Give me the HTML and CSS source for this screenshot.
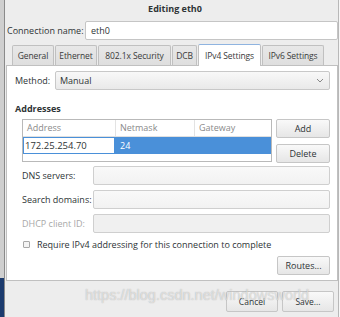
FILE: index.html
```html
<!DOCTYPE html>
<html>
<head>
<meta charset="utf-8">
<link rel="stylesheet" href="styles.css">
</head>
<body>
<div class="screen">
  <div class="bgwin"></div>
  <div class="dialog">
    <div class="title">Editing eth0</div>
    <div class="conn-row">
      <span class="label">Connection name:</span>
      <div class="entry conn-entry">eth0</div>
    </div>
    <div class="tabs">
      <div class="tab t-gen">General</div>
      <div class="tab t-eth">Ethernet</div>
      <div class="tab t-sec">802.1x Security</div>
      <div class="tab t-dcb">DCB</div>
      <div class="tab t-v4 active">IPv4 Settings</div>
      <div class="tab t-v6">IPv6 Settings</div>
    </div>
    <div class="panel">
      <div class="method-row">
        <span class="label">Method:</span>
        <div class="combo"><span>Manual</span>
          <svg class="chev" width="8" height="5" viewBox="0 0 8 5"><path d="M1 1 L4 4 L7 1" fill="none" stroke="#888" stroke-width="1"/></svg>
        </div>
      </div>
      <div class="section-title">Addresses</div>
      <div class="addr-row">
        <div class="table">
          <div class="thead">
            <div class="th c1">Address</div>
            <div class="th c2">Netmask</div>
            <div class="th c3">Gateway</div>
          </div>
          <div class="trow sel">
            <div class="td c1"><div class="cell-edit">172.25.254.70</div></div>
            <div class="td c2">24</div>
            <div class="td c3"></div>
          </div>
        </div>
        <div class="btn-col">
          <div class="btn">Add</div>
          <div class="btn">Delete</div>
        </div>
      </div>
      <div class="form">
        <span class="label">DNS servers:</span><div class="entry"></div>
        <span class="label">Search domains:</span><div class="entry"></div>
        <span class="label dim">DHCP client ID:</span><div class="entry disabled"></div>
      </div>
      <div class="check-row">
        <span class="checkbox"></span>
        <span class="label">Require IPv4 addressing for this connection to complete</span>
      </div>
      <div class="routes-row"><div class="btn">Routes...</div></div>
    </div>
    <div class="footer">
      <div class="btn fbtn">Cancel</div>
      <div class="btn fbtn">Save...</div>
    </div>
    <div class="watermark">https://blog.csdn.net/windowsworld</div>
  </div>
  <div class="rightedge"></div>
</div>
</body>
</html>
```

FILE: styles.css
```css
* { box-sizing: border-box; }
html, body { margin: 0; padding: 0; }
body {
  width: 340px;
  height: 317px;
  overflow: hidden;
  font-family: "Open Sans", "DejaVu Sans", sans-serif;
  font-size: 9px;
  color: #2e3436;
  background: #ededed;
}
.screen {
  display: flex;
  height: 317px;
}
.bgwin {
  width: 5px;
  flex: none;
  background: linear-gradient(to bottom, #cfcfcf 0, #cfcfcf 278px, #1c3b6e 278px, #1c3b6e 100%);
  border-right: 1px solid #8a8a8a;
}
.dialog {
  position: relative;
  flex: 1;
  background: #ededed;
  display: flex;
  flex-direction: column;
  padding: 0 0 0 1px;
}
.rightedge {
  width: 2px;
  flex: none;
  background: #f6f6f6;
  border-left: 1px solid #b8b8b8;
}
.title {
  height: 19px;
  line-height: 17px;
  text-align: center;
  font-weight: bold;
  font-size: 9px;
  color: #2e3436;
  padding-left: 6px;
}
.conn-row {
  display: flex;
  align-items: center;
  height: 19px;
  margin-top: 2px;
  padding-left: 1px;
}
.conn-row .label { width: 78px; flex: none; }
.entry {
  height: 19px;
  background: #fff;
  border: 1px solid #c5c5c5;
  border-radius: 2px;
  padding-left: 5px;
  line-height: 17px;
}
.conn-entry { flex: 1; }
.tabs {
  display: flex;
  align-items: flex-end;
  height: 25px;
  padding-left: 6px;
}
.tab {
  flex: none;
  height: 20px;
  white-space: nowrap;
  text-align: center;
  font-size: 8.5px;
  letter-spacing: -0.1px;
  line-height: 19px;
  border: 1px solid #c0c0c0;
  border-bottom: none;
  border-radius: 2px 2px 0 0;
  background: linear-gradient(#e8e8e8, #dedede);
  margin-right: 1px;
  color: #3a3a3a;
  overflow: hidden;
}
.t-gen { width: 42px; }
.t-eth { width: 42px; }
.t-sec { width: 73px; }
.t-dcb { width: 25px; }
.t-v4 { width: 63px; }
.t-v6 { width: 62px; }
.tab.active {
  height: 22px;
  background: #fff;
  border-top: 1px solid #8fb4e0;
  line-height: 21px;
  position: relative;
  margin-bottom: -1px;
}
.panel {
  background: #fff;
  border: 1px solid #c0c0c0;
  height: 216px;
  margin-right: 0;
  padding: 5px 7px 0 8px;
}
.method-row {
  display: flex;
  align-items: center;
  height: 19px;
}
.method-row .label { width: 40px; flex: none; }
.combo {
  flex: 1;
  height: 19px;
  border: 1px solid #c8c8c8;
  border-radius: 2px;
  background: linear-gradient(#f8f8f8, #e9e9e9);
  display: flex;
  align-items: center;
  justify-content: space-between;
  padding: 0 5px 0 4px;
}
.section-title {
  font-weight: bold;
  margin-top: 12px;
  height: 14px;
  line-height: 14px;
}
.addr-row {
  display: flex;
  margin-top: 3px;
  padding-left: 7px;
}
.table {
  width: 250px;
  height: 43px;
  border: 1px solid #b9b9b9;
  background: #fff;
  flex: none;
}
.thead { display: flex; height: 17px; border-bottom: 1px solid #e0e0e0; }
.th {
  color: #8a8a8a;
  line-height: 16px;
  padding-left: 4px;
  border-right: 1px solid #e3e3e3;
}
.th.c3 { border-right: none; }
.c1 { width: 93px; }
.c2 { width: 79px; }
.c3 { flex: 1; }
.trow { display: flex; height: 17px; }
.trow.sel { background: #4a90d9; color: #fff; }
.td { line-height: 17px; padding-left: 4px; }
.td.c1 { padding: 0; }
.cell-edit {
  width: 92px;
  height: 17px;
  background: #fff;
  color: #2e3436;
  border: 1px solid #4a90d9;
  padding-left: 1px;
  line-height: 15px;
  font-size: 9.5px;
}
.btn-col {
  display: flex;
  flex-direction: column;
  gap: 6px;
  margin-left: 4px;
  flex: 1;
}
.btn {
  height: 19px;
  border: 1px solid #c6c6c6;
  border-radius: 2px;
  background: linear-gradient(#f9f9f9, #e6e6e6);
  text-align: center;
  line-height: 17px;
  color: #2e3436;
}
.form {
  display: grid;
  grid-template-columns: 71px 1fr;
  row-gap: 5px;
  align-items: center;
  margin-top: 3px;
  padding-left: 7px;
}
.form .entry {
  background: linear-gradient(#f9f9f9, #f2f2f2);
  border-color: #cfcfcf;
}
.form .entry.disabled { background: #f0f0f0; }
.dim { color: #a8a8a8; }
.check-row {
  display: flex;
  align-items: center;
  margin-top: 5px;
  padding-left: 8px;
  height: 12px;
}
.checkbox {
  width: 7px;
  height: 7px;
  border: 1px solid #a8a8a8;
  border-radius: 1px;
  margin-right: 7px;
  background: #f4f4f4;
}
.routes-row {
  display: flex;
  justify-content: flex-end;
  margin-top: 6px;
}
.routes-row .btn { width: 53px; }
.footer {
  display: flex;
  justify-content: flex-end;
  gap: 4px;
  margin-top: 10px;
  padding-right: 4px;
}
.fbtn { width: 52px; height: 21px; line-height: 19px; font-size: 8.5px; }
.watermark {
  position: absolute;
  left: 80px;
  top: 287px;
  font-family: "Liberation Sans", sans-serif;
  font-size: 14.5px;
  color: rgba(255,255,255,0.55);
  text-shadow: 0 0 1px rgba(120,120,120,0.6);
  white-space: nowrap;
  pointer-events: none;
}
```
